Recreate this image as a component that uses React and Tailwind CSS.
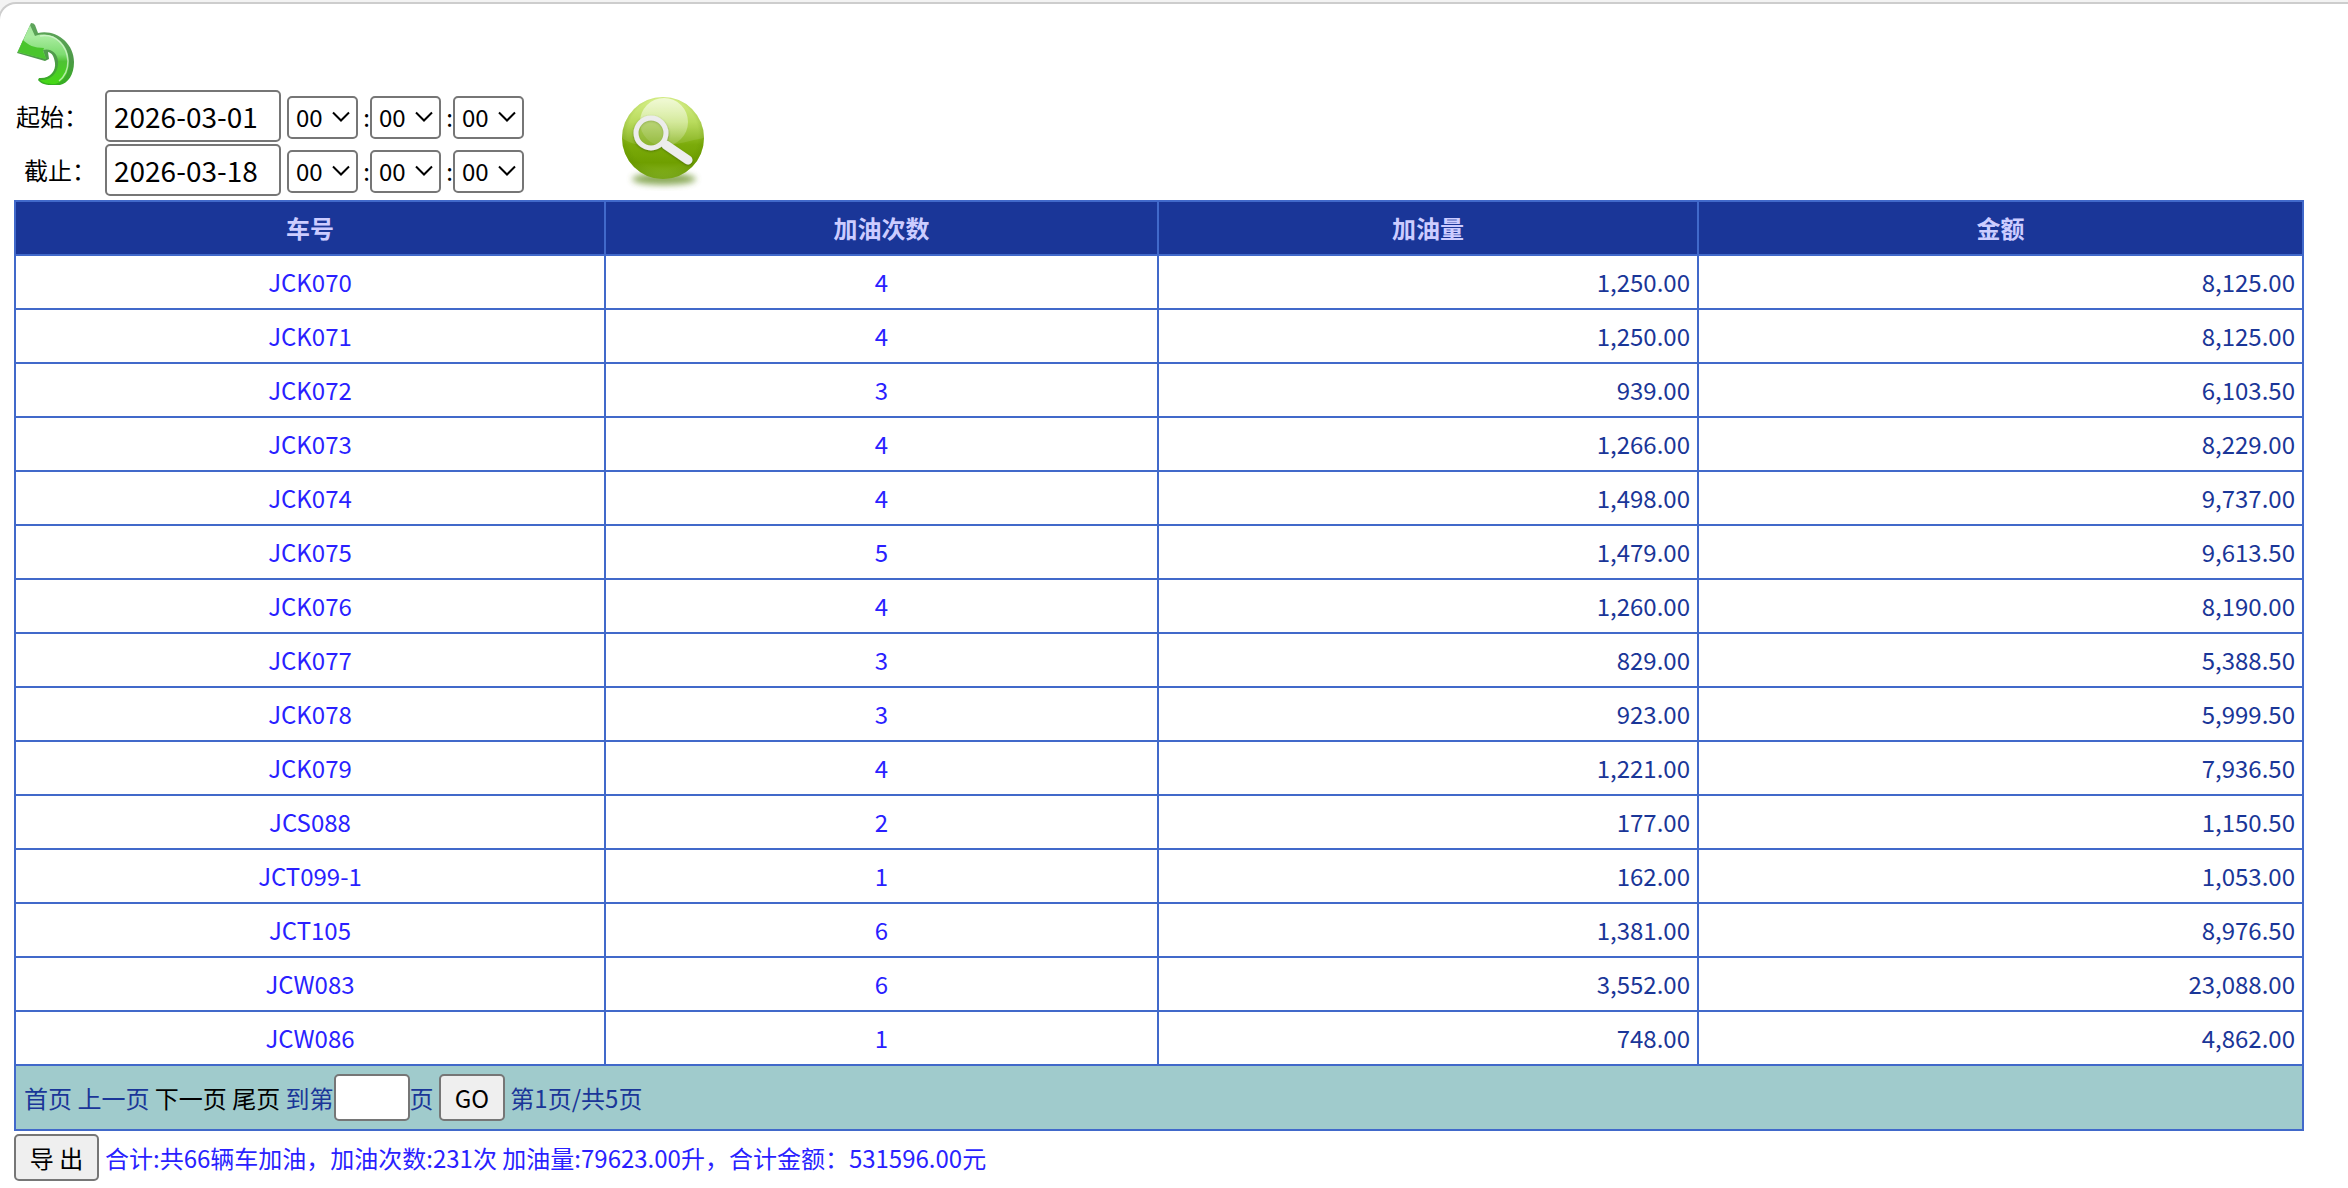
import React from "react";

const rows = [
  ["JCK070", "4", "1,250.00", "8,125.00"],
  ["JCK071", "4", "1,250.00", "8,125.00"],
  ["JCK072", "3", "939.00", "6,103.50"],
  ["JCK073", "4", "1,266.00", "8,229.00"],
  ["JCK074", "4", "1,498.00", "9,737.00"],
  ["JCK075", "5", "1,479.00", "9,613.50"],
  ["JCK076", "4", "1,260.00", "8,190.00"],
  ["JCK077", "3", "829.00", "5,388.50"],
  ["JCK078", "3", "923.00", "5,999.50"],
  ["JCK079", "4", "1,221.00", "7,936.50"],
  ["JCS088", "2", "177.00", "1,150.50"],
  ["JCT099-1", "1", "162.00", "1,053.00"],
  ["JCT105", "6", "1,381.00", "8,976.50"],
  ["JCW083", "6", "3,552.00", "23,088.00"],
  ["JCW086", "1", "748.00", "4,862.00"],
];

function BackIcon() {
  return (
    <svg viewBox="0 0 60 66" className="h-[66px] w-[60px]" aria-hidden="true">
      <defs>
        <linearGradient id="backFace" x1="0" y1="0" x2="0" y2="1">
          <stop offset="0" stopColor="#a5e89e" />
          <stop offset="0.2" stopColor="#a9ec9f" />
          <stop offset="0.5" stopColor="#7ddb70" />
          <stop offset="0.62" stopColor="#4fc233" />
          <stop offset="1" stopColor="#45d915" />
        </linearGradient>
        <linearGradient id="backEdge" x1="0" y1="0" x2="0" y2="1">
          <stop offset="0" stopColor="#5fa55c" />
          <stop offset="0.6" stopColor="#4d9a48" />
          <stop offset="1" stopColor="#35b01f" />
        </linearGradient>
      </defs>
      <path
        d="M17 2 Q20 2 21 4 L24 12 C42 8 60 22 60 41 C60 54 54 62 46 64 L37 64 C31 64 26 62 24 59 L25 57 C36 58 42 50 41 42 C40 35 38 32 34 31 L35 38 L31 40 L3 32 Z"
        fill="url(#backEdge)"
      />
      <path
        d="M16 4 L21 15 C38 9 55 22 55 41 C55 53 49 61 41 63 C34 63 29 62 26 59 C38 60 45 50 44 40 C43 31 36 27 29 29 L32 38 L4 31 Z"
        fill="url(#backFace)"
      />
      <path d="M4 31 L9 19 C14 24 20 27 30 27 L29 30 L32 38 Z" fill="#4ac52d" />
      <path
        d="M26 15 C42 12 53 25 54 40 C54 50 50 56 45 60"
        fill="none"
        stroke="#d8f6d3"
        strokeWidth="1.5"
        opacity="0.75"
      />
    </svg>
  );
}

function SearchIcon() {
  return (
    <svg viewBox="0 0 92 96" className="h-[96px] w-[92px]" aria-hidden="true">
      <defs>
        <linearGradient id="ball" x1="0" y1="0" x2="0" y2="1">
          <stop offset="0" stopColor="#d3ee7c" />
          <stop offset="0.3" stopColor="#b2d84c" />
          <stop offset="0.58" stopColor="#7bab0a" />
          <stop offset="0.8" stopColor="#6f9f00" />
          <stop offset="1" stopColor="#8cb82c" />
        </linearGradient>
        <radialGradient id="rim" cx="0.5" cy="0.45" r="0.55">
          <stop offset="0.78" stopColor="#5f8f00" stopOpacity="0" />
          <stop offset="1" stopColor="#5f8f00" stopOpacity="0.45" />
        </radialGradient>
        <linearGradient id="gloss" x1="0" y1="0" x2="0" y2="1">
          <stop offset="0" stopColor="#fff" stopOpacity="0.65" />
          <stop offset="1" stopColor="#fff" stopOpacity="0.12" />
        </linearGradient>
        <filter id="soft" x="-20%" y="-80%" width="140%" height="260%">
          <feGaussianBlur stdDeviation="3" />
        </filter>
        <filter id="glassShadow" x="-20%" y="-20%" width="140%" height="140%">
          <feDropShadow dx="0" dy="1" stdDeviation="1.2" floodColor="#3c5c00" floodOpacity="0.6" />
        </filter>
      </defs>
      <ellipse cx="47" cy="84" rx="32" ry="6" fill="#6f9630" opacity="0.8" filter="url(#soft)" />
      <circle cx="46" cy="43" r="41" fill="url(#ball)" />
      <circle cx="46" cy="43" r="41" fill="url(#rim)" />
      <path d="M5 43 A41 41 0 0 1 87 43 C74 45 60 50 46 51 C30 52 14 50 5 43 Z" fill="#fff" opacity="0.1" />
      <circle cx="47" cy="27" r="24" fill="url(#gloss)" />
      <g filter="url(#glassShadow)">
        <path d="M49 50 L71 65" stroke="#ededed" strokeWidth="9" strokeLinecap="round" />
        <circle cx="34" cy="38" r="15" fill="#a9d04e" fillOpacity="0.3" stroke="#ececec" strokeWidth="5" />
      </g>
    </svg>
  );
}

function TimeSelect({ label }) {
  return (
    <span className="relative inline-flex">
      <select
        aria-label={label}
        defaultValue="00"
        className="h-[43px] w-[71px] appearance-none rounded-[5px] border-2 border-[#767676] bg-white pl-[7px] text-2xl leading-8 text-black"
      >
        <option>00</option>
      </select>
      <svg
        viewBox="0 0 18 12"
        className="pointer-events-none absolute top-[15px] right-2 h-3 w-[18px]"
        fill="none"
        stroke="#000"
        strokeWidth="2"
        aria-hidden="true"
      >
        <path d="M1 1.5 L9 9.5 L17 1.5" />
      </svg>
    </span>
  );
}

function DateRow({ id, label, value, indent }) {
  return (
    <div className="flex h-[54px] items-center">
      <label htmlFor={id} className={indent ? "w-[89px] pl-2" : "w-[89px]"}>
        {label}
      </label>
      <input
        id={id}
        type="text"
        defaultValue={value}
        className="h-[52px] w-[176px] rounded-[5px] border-2 border-[#767676] bg-white px-[7px] text-[28px] leading-10 text-black"
      />
      <div className="ml-[6px] flex items-center pt-[2px]">
        <TimeSelect label={label + "时"} />
        <span className="w-3 text-right">:</span>
        <TimeSelect label={label + "分"} />
        <span className="w-3 text-right">:</span>
        <TimeSelect label={label + "秒"} />
      </div>
    </div>
  );
}

const cell = "h-[54px] border-2 border-[#4169ca] px-[7px] py-0";

export default function App() {
  return (
    <div className="min-h-screen overflow-hidden bg-[#f3f3f3] pt-[2px] font-['Noto_Sans_CJK_SC',sans-serif] text-2xl leading-9 text-black">
      <main className="-mx-[2px] min-h-[calc(100vh-2px)] rounded-tl-[18px] border-2 border-b-0 border-[#cdcdcd] bg-white pr-11 pl-[14px]">
        <a href="#back" aria-label="返回" className="mt-[17px] mb-[2px] block w-[60px]">
          <BackIcon />
        </a>
        <form className="flex items-center" onSubmit={(e) => e.preventDefault()}>
          <div className="ml-[2px]">
            <DateRow id="start" label="起始：" value="2026-03-01" />
            <DateRow id="end" label="截止：" value="2026-03-18" indent />
          </div>
          <button type="submit" aria-label="查询" className="ml-[93px]">
            <SearchIcon />
          </button>
        </form>

        <table className="mt-[3px] w-full table-fixed border-collapse border-2 border-[#4169ca]">
          <colgroup>
            <col className="w-[590px]" />
            <col className="w-[553px]" />
            <col className="w-[540px]" />
            <col className="w-[605px]" />
          </colgroup>
          <thead>
            <tr className="bg-[#1a3698] text-[#ccccff]">
              {["车号", "加油次数", "加油量", "金额"].map((h) => (
                <th key={h} className={cell + " font-bold"}>{h}</th>
              ))}
            </tr>
          </thead>
          <tbody>
            {rows.map(([car, count, litres, amount]) => (
              <tr key={car} className="text-[#1a3698]">
                <td className={cell + " text-center text-[#2a1fff]"}>
                  <a href={"#" + car}>{car}</a>
                </td>
                <td className={cell + " text-center text-[#2a1fff]"}>{count}</td>
                <td className={cell + " text-right"}>{litres}</td>
                <td className={cell + " text-right"}>{amount}</td>
              </tr>
            ))}
          </tbody>
          <tfoot>
            <tr>
              <td colSpan={4} className="h-[65px] border-2 border-[#4169ca] bg-[#a0cbcc] px-2 py-0 text-[#1a3698]">
                首页 上一页{" "}
                <a href="#next" className="text-black">下一页</a>{" "}
                <a href="#last" className="text-black">尾页</a>{" "}
                <label htmlFor="page">到第</label>
                <input
                  id="page"
                  type="text"
                  className="h-[47px] w-[76px] rounded-[5px] border-2 border-[#767676] bg-white px-1 text-black"
                />
                页{" "}
                <button
                  type="button"
                  className="h-[47px] w-[66px] rounded-[5px] border-2 border-[#767676] bg-[#efefef] text-black"
                >
                  GO
                </button>{" "}
                第1页/共5页
              </td>
            </tr>
          </tfoot>
        </table>

        <div className="mt-[3px] flex items-center text-[#2a1fff]">
          <button
            type="button"
            className="mr-[6px] h-[47px] w-[85px] rounded-[5px] border-2 border-[#767676] bg-[#efefef] text-black"
          >
            导 出
          </button>
          <p>合计:共66辆车加油，加油次数:231次 加油量:79623.00升，合计金额：531596.00元</p>
        </div>
      </main>
    </div>
  );
}
